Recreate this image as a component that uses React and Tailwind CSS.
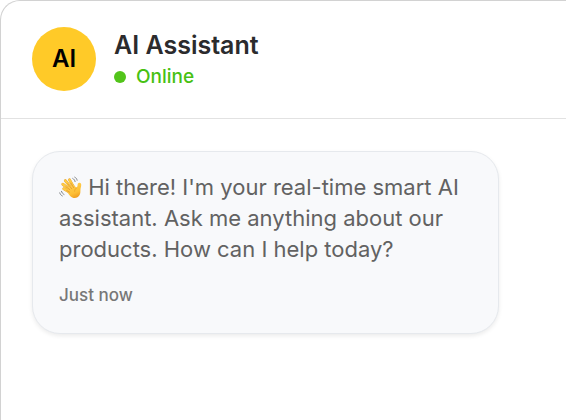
const WavingHand = () => (
	<svg
		role="img"
		aria-label="Waving hand"
		viewBox="0 0 24 24"
		className="inline-block w-[23px] h-[23px] align-[-4px]">
		<defs>
			<linearGradient id="skin" x1="0.3" y1="0" x2="0.7" y2="1">
				<stop offset="0" stopColor="#ffd052" />
				<stop offset="0.65" stopColor="#fdbf35" />
				<stop offset="1" stopColor="#ee981c" />
			</linearGradient>
		</defs>
		{/* Fingers */}
		<g stroke="#e3a23a" strokeWidth="3" strokeLinecap="round">
			<path d="M13 18 5 13.2" />
			<path d="M13 15.500 4 8.600" />
			<path d="M14 14 6.600 4.800" />
			<path d="M16 13 11 4" />
		</g>
		<g stroke="#ffcb43" strokeWidth="2.400" strokeLinecap="round">
			<path d="M13 18 5 13.2" />
			<path d="M13 15.500 4 8.600" />
			<path d="M14 14 6.600 4.800" />
			<path d="M16 13 11 4" />
		</g>
		{/* Palm and thumb */}
		<path
			fill="url(#skin)"
			d="M8.400 15.700 10 11.600l5-2.600 3.200 3.200c1-.8 1.100-1.700 1.200-3.100.1-1.500.9-2.300 2.100-2.100 1.200.2 1.800 1.100 1.700 2.500-.1 1.900-.7 3.200-.8 4.900-.1 2.400 0 3.800-.9 5.500-1.300 2.400-3.600 3.500-6.300 3.100-2.600-.4-4.700-2.600-6.800-7.300z"
		/>
		<path
			d="m7.200 11.200 4 3M9 8.100l4.300 5.200M12.400 7.400l3 4.800M8 15.100l3 1.800"
			stroke="#d98c2b"
			strokeWidth="0.7"
			strokeLinecap="round"
			fill="none"
		/>
		<path
			d="M18.500 12.200c-1.500.9-2.200 2.100-2.200 3.700"
			stroke="#e79a26"
			strokeWidth="0.7"
			strokeLinecap="round"
			fill="none"
		/>
		{/* Motion marks */}
		<g stroke="#777b80" strokeWidth="1" strokeLinecap="round" fill="none">
			<path d="M14.400 2.600c1.200.6 2.100 1.700 2.400 3.200" />
			<path d="M16.500 1.200c1.200.6 2.100 1.700 2.400 3.200" />
			<path d="M2.600 16c.4 1.500 1.300 2.600 2.600 3.200" />
			<path d="M.8 17.600c.4 1.500 1.300 2.600 2.600 3.200" />
		</g>
	</svg>
);

const ChatHeader = () => (
	<header className="flex items-center gap-[18px] px-[31px] pt-6 pb-[25px] border-b border-[#e2e2e2]">
		<div className="flex shrink-0 items-center justify-center w-16 h-16 rounded-full bg-[#ffca28] text-2xl font-semibold text-black">
			AI
		</div>
		<div className="pt-1">
			<h1 className="text-[25px] leading-8 font-semibold text-[#2b2b2d]">
				AI Assistant
			</h1>
			<p className="flex items-center gap-[10px] text-[19px] leading-8 font-medium text-[#47c112]">
				<span className="w-3 h-3 rounded-full bg-[#52c41a]" />
				Online
			</p>
		</div>
	</header>
);

const Message = ({ children, time }) => (
	<article className="max-w-[467px] rounded-[28px] border border-[#e6e9ed] bg-[#f8f9fb] px-[26px] pt-5 pb-6 shadow-[0_2px_4px_rgba(0,0,0,0.08)]">
		<p className="text-[22px] leading-[31px] text-[#626262]">{children}</p>
		<time className="mt-4 block text-[17px] leading-7 font-medium text-[#777777]">
			{time}
		</time>
	</article>
);

const App = () => {
	return (
		<main className="min-h-screen rounded-tl-[20px] border-t border-l border-[#d2d2d2] bg-white font-['Inter','Liberation_Sans',sans-serif]">
			<ChatHeader />
			<section className="px-[31px] py-8" aria-label="Conversation">
				<Message time="Just now">
					<WavingHand /> Hi there! I'm your real-time smart AI assistant. Ask me
					anything about our products. How can I help today?
				</Message>
			</section>
		</main>
	);
};

export default App;
